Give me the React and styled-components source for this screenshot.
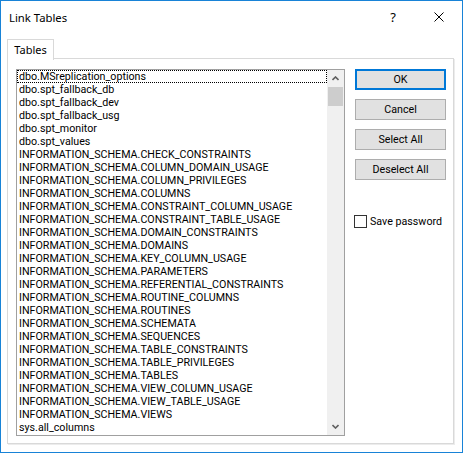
import React from "react";
import styled, { createGlobalStyle } from "styled-components";

const GlobalStyle = createGlobalStyle`
  html, body {
    margin: 0;
    padding: 0;
    background: #ffffff;
  }
  body {
    width: 463px;
    height: 453px;
    overflow: hidden;
  }
`;

const Window = styled.div`
  box-sizing: border-box;
  width: 463px;
  height: 453px;
  border: 1px solid #1883d7;
  background: #ffffff;
  display: flex;
  flex-direction: column;
  font-family: Roboto, "Liberation Sans", Arial, sans-serif;
  color: #000;
`;

const TitleBar = styled.div`
  flex: none;
  height: 31px;
  display: flex;
  align-items: center;
  padding-left: 8px;
`;

const Title = styled.span`
  flex: 1;
  font-family: "Noto Sans", "Open Sans", sans-serif;
  font-size: 11.3px;
  padding-top: 2px;
`;

const CaptionButton = styled.div`
  width: 46px;
  height: 31px;
  display: flex;
  align-items: center;
  justify-content: center;
  padding-top: 1px;
  font-family: "Noto Sans", "Open Sans", sans-serif;
  font-size: 13px;
`;

const Body = styled.div`
  flex: 1;
  display: flex;
  flex-direction: column;
  padding: 7px 8px 8px 6px;
`;

const TabStrip = styled.div`
  display: flex;
  height: 20px;
  margin-bottom: -1px;
`;

const Tab = styled.div`
  box-sizing: border-box;
  position: relative;
  z-index: 1;
  width: 47px;
  height: 21px;
  border: 1px solid #d9d9d9;
  border-bottom: none;
  background: #ffffff;
  text-align: center;
  font-family: "Noto Sans", "Open Sans", sans-serif;
  font-size: 11px;
  line-height: 19px;
`;

const Panel = styled.div`
  flex: 1;
  display: flex;
  gap: 10px;
  border: 1px solid #d9d9d9;
  box-shadow: 1px 1px 0 #ececec;
  padding: 10px 7px 6px 8px;
  background: #ffffff;
`;

const ListBox = styled.div`
  box-sizing: border-box;
  width: 329px;
  height: 367px;
  border: 1px solid #a0a0a0;
  display: flex;
  background: #ffffff;
`;

const Items = styled.div`
  flex: 1;
  overflow: hidden;
`;

const Item = styled.div`
  box-sizing: border-box;
  height: 13px;
  line-height: 13px;
  padding-left: 2px;
  font-size: 10.7px;
  white-space: nowrap;
  outline: ${(p) => (p.$focused ? "1px dotted #000" : "none")};
  outline-offset: -1px;
`;

const ScrollBar = styled.div`
  width: 17px;
  background: #f0f0f0;
  display: flex;
  flex-direction: column;
`;

const ScrollArrow = styled.div`
  height: 17px;
  display: flex;
  align-items: center;
  justify-content: center;
`;

const ScrollTrack = styled.div`
  flex: 1;
  display: flex;
  flex-direction: column;
  padding: 0 1px;
`;

const Thumb = styled.div`
  height: 19px;
  background: #cdcdcd;
`;

const SideColumn = styled.div`
  width: 91px;
  display: flex;
  flex-direction: column;
  gap: 9px;
`;

const Button = styled.div`
  box-sizing: border-box;
  height: 21px;
  background: #e1e1e1;
  border: ${(p) => (p.$default ? "2px solid #0078d7" : "1px solid #adadad")};
  display: flex;
  align-items: center;
  justify-content: center;
  font-size: 10.7px;
`;

const CheckRow = styled.label`
  display: flex;
  align-items: center;
  gap: 3px;
  margin-top: 26px;
  margin-left: -1px;
  font-size: 10.7px;
`;

const CheckBox = styled.span`
  box-sizing: border-box;
  width: 13px;
  height: 13px;
  border: 1px solid #333333;
  background: #ffffff;
`;

const tables = [
  "dbo.MSreplication_options",
  "dbo.spt_fallback_db",
  "dbo.spt_fallback_dev",
  "dbo.spt_fallback_usg",
  "dbo.spt_monitor",
  "dbo.spt_values",
  "INFORMATION_SCHEMA.CHECK_CONSTRAINTS",
  "INFORMATION_SCHEMA.COLUMN_DOMAIN_USAGE",
  "INFORMATION_SCHEMA.COLUMN_PRIVILEGES",
  "INFORMATION_SCHEMA.COLUMNS",
  "INFORMATION_SCHEMA.CONSTRAINT_COLUMN_USAGE",
  "INFORMATION_SCHEMA.CONSTRAINT_TABLE_USAGE",
  "INFORMATION_SCHEMA.DOMAIN_CONSTRAINTS",
  "INFORMATION_SCHEMA.DOMAINS",
  "INFORMATION_SCHEMA.KEY_COLUMN_USAGE",
  "INFORMATION_SCHEMA.PARAMETERS",
  "INFORMATION_SCHEMA.REFERENTIAL_CONSTRAINTS",
  "INFORMATION_SCHEMA.ROUTINE_COLUMNS",
  "INFORMATION_SCHEMA.ROUTINES",
  "INFORMATION_SCHEMA.SCHEMATA",
  "INFORMATION_SCHEMA.SEQUENCES",
  "INFORMATION_SCHEMA.TABLE_CONSTRAINTS",
  "INFORMATION_SCHEMA.TABLE_PRIVILEGES",
  "INFORMATION_SCHEMA.TABLES",
  "INFORMATION_SCHEMA.VIEW_COLUMN_USAGE",
  "INFORMATION_SCHEMA.VIEW_TABLE_USAGE",
  "INFORMATION_SCHEMA.VIEWS",
  "sys.all_columns",
];

const Chevron = ({ down }) => (
  <svg width="7" height="5" viewBox="0 0 7 5">
    <path
      d={down ? "M0.5 1 L3.5 4 L6.5 1" : "M0.5 4 L3.5 1 L6.5 4"}
      fill="none"
      stroke="#606060"
      strokeWidth="1.6"
    />
  </svg>
);

const CloseGlyph = () => (
  <svg width="10" height="10" viewBox="0 0 10 10">
    <path d="M0.5 0.5 L9.5 9.5 M9.5 0.5 L0.5 9.5" stroke="#000" strokeWidth="1" />
  </svg>
);

export default function App() {
  return (
    <>
      <GlobalStyle />
      <Window>
        <TitleBar>
          <Title>Link Tables</Title>
          <CaptionButton>?</CaptionButton>
          <CaptionButton>
            <CloseGlyph />
          </CaptionButton>
        </TitleBar>
        <Body>
          <TabStrip>
            <Tab>Tables</Tab>
          </TabStrip>
          <Panel>
            <ListBox>
              <Items>
                {tables.map((t, i) => (
                  <Item key={t} $focused={i === 0}>
                    {t}
                  </Item>
                ))}
              </Items>
              <ScrollBar>
                <ScrollArrow>
                  <Chevron />
                </ScrollArrow>
                <ScrollTrack>
                  <Thumb />
                </ScrollTrack>
                <ScrollArrow>
                  <Chevron down />
                </ScrollArrow>
              </ScrollBar>
            </ListBox>
            <SideColumn>
              <Button $default>OK</Button>
              <Button>Cancel</Button>
              <Button>Select All</Button>
              <Button>Deselect All</Button>
              <CheckRow>
                <CheckBox />
                Save password
              </CheckRow>
            </SideColumn>
          </Panel>
        </Body>
      </Window>
    </>
  );
}
